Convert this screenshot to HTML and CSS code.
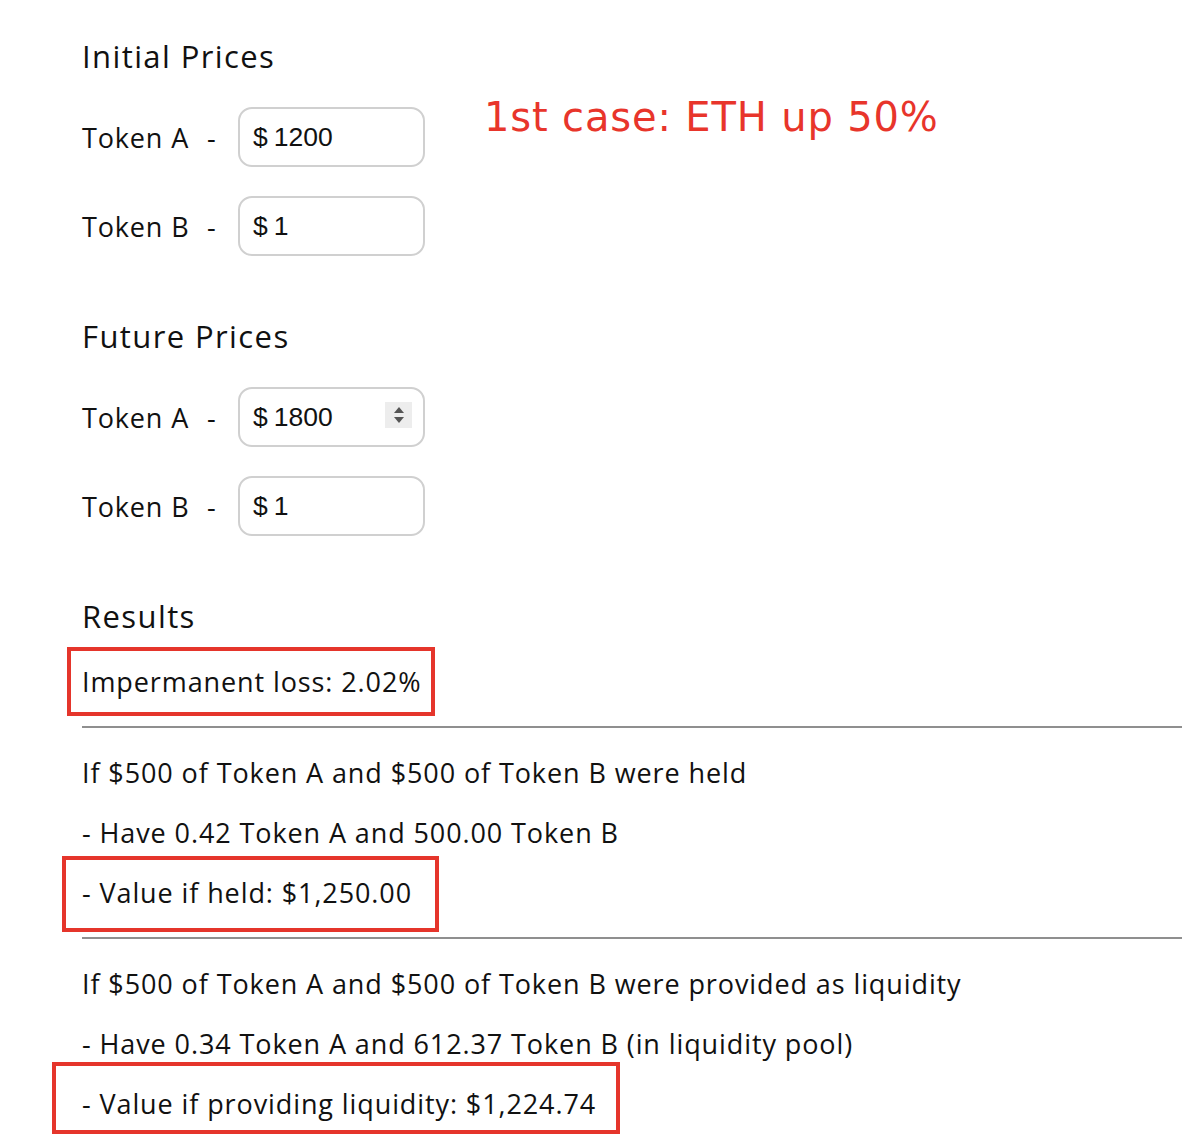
FILE: index.html
```html
<!DOCTYPE html>
<html>
<head>
<meta charset="utf-8">
<link rel="stylesheet" href="styles.css">
</head>
<body>
<main class="page">
  <div class="note">1st case: ETH up 50%</div>

  <h2 class="heading">Initial Prices</h2>
  <div class="rows">
    <div class="row">
      <span class="label">Token A</span><span class="dash">-</span>
      <div class="field"><span class="cur">$</span><span class="val">1200</span></div>
    </div>
    <div class="row">
      <span class="label">Token B</span><span class="dash">-</span>
      <div class="field"><span class="cur">$</span><span class="val">1</span></div>
    </div>
  </div>

  <h2 class="heading heading-gap">Future Prices</h2>
  <div class="rows">
    <div class="row">
      <span class="label">Token A</span><span class="dash">-</span>
      <div class="field"><span class="cur">$</span><span class="val">1800</span>
        <span class="spin"><span class="up"></span><span class="down"></span></span>
      </div>
    </div>
    <div class="row">
      <span class="label">Token B</span><span class="dash">-</span>
      <div class="field"><span class="cur">$</span><span class="val">1</span></div>
    </div>
  </div>

  <h2 class="heading heading-gap">Results</h2>
  <div class="results">
    <p class="line first"><span class="mark mark-loss">Impermanent loss: 2.02%</span></p>
    <hr class="rule">
    <p class="line">If $500 of Token A and $500 of Token B were held</p>
    <p class="line">- Have 0.42 Token A and 500.00 Token B</p>
    <p class="line"><span class="mark mark-held">- Value if held: $1,250.00</span></p>
    <hr class="rule">
    <p class="line">If $500 of Token A and $500 of Token B were provided as liquidity</p>
    <p class="line">- Have 0.34 Token A and 612.37 Token B (in liquidity pool)</p>
    <p class="line"><span class="mark mark-liq">- Value if providing liquidity: $1,224.74</span></p>
  </div>
</main>
</body>
</html>
```

FILE: styles.css
```css
html, body {
  margin: 0;
  padding: 0;
  background: #ffffff;
}

.page {
  position: relative;
  padding: 36px 18px 0 82px;
  font-family: "Open Sans", "Lato", sans-serif;
  color: #111111;
  height: 1141px;
  box-sizing: border-box;
  overflow: hidden;
}

.note {
  position: absolute;
  left: 484px;
  top: 94px;
  font-family: "DejaVu Sans", Verdana, sans-serif;
  font-size: 40px;
  line-height: 46px;
  color: #e8352b;
  letter-spacing: 0.85px;
}

.heading {
  margin: 0;
  font-size: 31px;
  line-height: 40px;
  font-weight: 400;
  letter-spacing: 1.4px;
}

.heading-gap {
  margin-top: 60px;
}

.rows {
  display: flex;
  flex-direction: column;
  gap: 29px;
  margin-top: 31px;
}

.row {
  display: flex;
  align-items: center;
  height: 60px;
  font-size: 27px;
  letter-spacing: 0.85px;
}

.label {
  width: 125px;
}

.dash {
  width: 31px;
}

.field {
  position: relative;
  box-sizing: border-box;
  width: 187px;
  height: 60px;
  border: 2px solid #d0d0d0;
  border-radius: 14px;
  display: flex;
  align-items: center;
  padding-left: 13px;
  font-family: "Liberation Sans", Arial, sans-serif;
  font-size: 26.5px;
  letter-spacing: 0;
  color: #111;
}

.cur {
  margin-right: 6px;
}

.spin {
  position: absolute;
  right: 11px;
  top: 13px;
  width: 27px;
  height: 26px;
  background: #ededed;
  display: flex;
  flex-direction: column;
  align-items: center;
  justify-content: center;
  gap: 4px;
}

.up {
  width: 0;
  height: 0;
  border-left: 5px solid transparent;
  border-right: 5px solid transparent;
  border-bottom: 6px solid #555;
}

.down {
  width: 0;
  height: 0;
  border-left: 5px solid transparent;
  border-right: 5px solid transparent;
  border-top: 6px solid #555;
}

.results {
  display: flex;
  flex-direction: column;
  gap: 24px;
  margin-top: 28px;
  font-size: 27px;
  letter-spacing: 0.9px;
}

.line {
  margin: 0;
  line-height: 36px;
  white-space: nowrap;
}

.rule {
  margin: 2px 0 3px 0;
  border: 0;
  height: 2px;
  background: #8f8f8f;
}

.mark {
  position: relative;
  display: inline-block;
}

.mark::after {
  content: "";
  position: absolute;
  border: 4px solid #e5352b;
}

.mark-loss::after {
  left: -15px;
  right: -13px;
  top: -17px;
  bottom: -16px;
}

.mark-held::after {
  left: -20px;
  right: -27px;
  top: -19px;
  bottom: -21px;
}

.mark-liq::after {
  left: -30px;
  right: -24px;
  top: -24px;
  bottom: -12px;
}
```
